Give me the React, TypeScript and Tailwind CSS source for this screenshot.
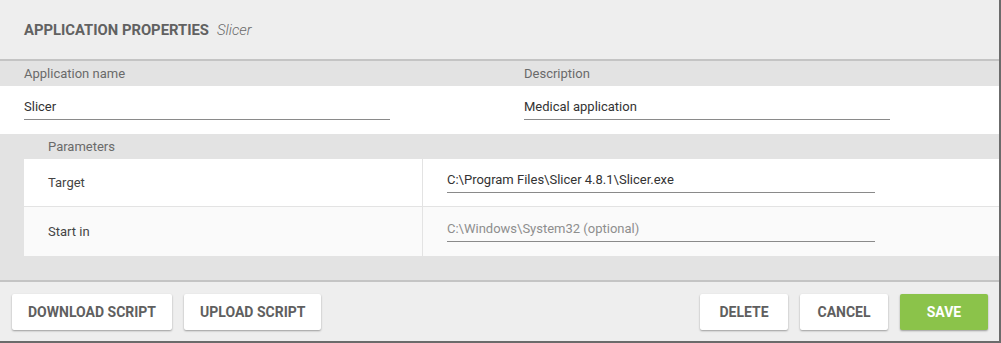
import React from "react";

// Application properties editor panel

function Field({ value, placeholder }: { value?: string; placeholder?: string }) {
  return (
    <div className="border-b border-[#8a8a8a] pb-[4px] text-[13px] leading-[16px]">
      {value ? (
        <span className="text-[#333]">{value}</span>
      ) : (
        <span className="text-[#8e8e8e]">{placeholder}</span>
      )}
    </div>
  );
}

function Btn({ children, primary, w }: { children: React.ReactNode; primary?: boolean; w?: string }) {
  return (
    <button
      type="button"
      className={
        "h-[36px] rounded-[2px] px-4 text-[14px] font-bold uppercase shadow-[0_1px_2px_rgba(0,0,0,0.35)] " +
        (w ? w + " " : "") +
        (primary ? "bg-[#8bc34a] text-white" : "bg-white text-[#5f5f5f]")
      }
    >
      {children}
    </button>
  );
}

export default function App() {
  return (
    <div
      className="w-[1001px] h-[343px] bg-[#eeeeee] border-r-2 border-b-2 border-[#6b6b6b] flex flex-col"
      style={{ fontFamily: "Roboto, 'Liberation Sans', sans-serif" }}
    >
      {/* header */}
      <div className="h-[59px] flex items-center px-6 gap-[8px] pt-[1px]">
        <span className="text-[14.8px] font-bold text-[#616161]">APPLICATION PROPERTIES</span>
        <span className="text-[14.8px] italic font-light text-[#6a6a6a]">Slicer</span>
      </div>
      <div className="h-[2px] bg-[#c4c4c4]" />

      {/* name / description */}
      <div className="bg-[#e3e3e3] h-[25px] flex items-center pl-6 text-[13px] text-[#6a6a6a]">
        <span className="w-[500px]">Application name</span>
        <span>Description</span>
      </div>
      <div className="bg-white h-[48px] flex items-center pl-6 pb-[1px]">
        <div className="w-[500px]">
          <div className="w-[366px]">
            <Field value="Slicer" />
          </div>
        </div>
        <div className="w-[366px]">
          <Field value="Medical application" />
        </div>
      </div>

      {/* parameters */}
      <div className="bg-[#e3e3e3] h-[146px] pl-6 flex flex-col">
        <div className="h-[25px] flex items-center pl-6 text-[13px] text-[#6a6a6a]">Parameters</div>
        <div className="flex flex-col">
          <div className="flex h-[48px] bg-white border-b border-[#e3e3e3]">
            <div className="w-[399px] border-r border-[#e3e3e3] flex items-center pl-6 text-[13px] text-[#444]">
              Target
            </div>
            <div className="flex-1 flex items-center pl-6">
              <div className="w-[428px]">
                <Field value="C:\Program Files\Slicer 4.8.1\Slicer.exe" />
              </div>
            </div>
          </div>
          <div className="flex h-[49px] bg-[#fafafa]">
            <div className="w-[399px] border-r border-[#e3e3e3] flex items-center pl-6 text-[13px] text-[#444]">
              Start in
            </div>
            <div className="flex-1 flex items-center pl-6">
              <div className="w-[428px]">
                <Field placeholder="C:\Windows\System32 (optional)" />
              </div>
            </div>
          </div>
        </div>
      </div>
      <div className="h-[2px] bg-[#c4c4c4]" />

      {/* footer */}
      <div className="flex-1 flex items-start pt-3 pl-3 pr-[11px]">
        <div className="flex gap-3">
          <Btn>Download script</Btn>
          <Btn>Upload script</Btn>
        </div>
        <div className="ml-auto flex gap-3">
          <Btn w="w-[88px]">Delete</Btn>
          <Btn w="w-[88px]">Cancel</Btn>
          <Btn w="w-[88px]" primary>Save</Btn>
        </div>
      </div>
    </div>
  );
}
